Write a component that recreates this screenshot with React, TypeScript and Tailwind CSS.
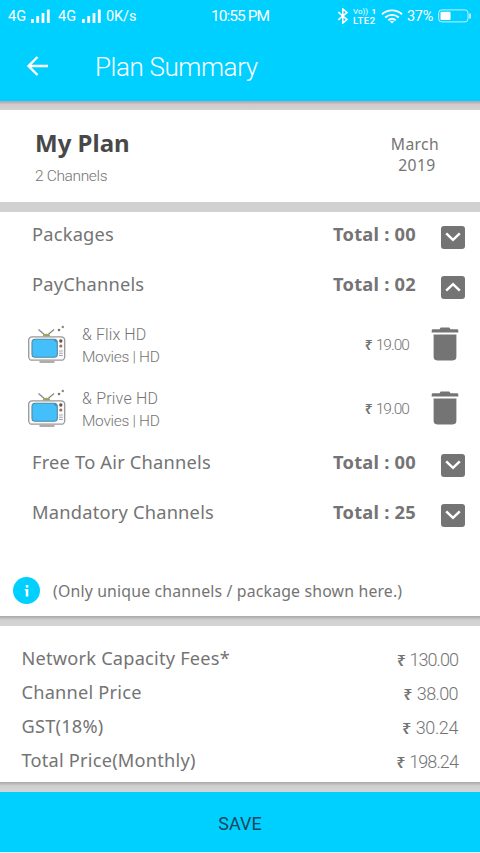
import { clsx } from "clsx"

const sections = {
  packages: { title: "Packages", total: "00", open: false },
  pay: { title: "PayChannels", total: "02", open: true },
  free: { title: "Free To Air Channels", total: "00", open: false },
  mandatory: { title: "Mandatory Channels", total: "25", open: false },
}

const channels = [
  { name: "& Flix HD", nameClass: "tracking-[0.1px]", genre: "Movies | HD", price: "19.00" },
  { name: "& Prive HD", nameClass: "tracking-[0.2px]", genre: "Movies | HD", price: "19.00" },
]

const fees = [
  { label: "Network Capacity Fees*", price: "130.00", priceClass: "tracking-[-0.95px]" },
  { label: "Channel Price", price: "38.00", priceClass: "tracking-[-0.6px]" },
  { label: "GST(18%)", price: "30.24", priceClass: "tracking-[-0.4px]" },
  { label: "Total Price(Monthly)", price: "198.24", priceClass: "tracking-[-0.9px]" },
]

function Signal() {
  return (
    <svg viewBox="0 0 20 15" width="20" height="15" fill="#fff" className="shrink-0">
      <rect x="0" y="10" width="2.8" height="4" rx="0.6" />
      <rect x="5.3" y="7" width="2.8" height="7" rx="0.6" />
      <rect x="10.6" y="4" width="2.8" height="10" rx="0.6" />
      <rect x="15.9" y="0.5" width="2.8" height="13.5" rx="0.6" />
    </svg>
  )
}

function StatusBar() {
  return (
    <div className="grid h-8 grid-cols-[211px_59px_1fr] items-center text-white">
      <div className="flex items-center pl-2">
        <span className="w-[23px] pt-[2px] text-[14.5px] tracking-[0.2px]">4G</span>
        <Signal />
        <span className="ml-[7px] w-[24px] pt-[2px] text-[14.5px] tracking-[0.2px]">4G</span>
        <Signal />
        <span className="ml-[4px] pt-[2px] text-[14.5px] tracking-[-0.1px]">0K/s</span>
      </div>
      <span className="whitespace-nowrap pt-[2px] text-[15.5px] tracking-[-0.95px]">10:55 PM</span>
      <div className="flex items-center pl-[67px]">
        <svg viewBox="0 0 12 16" width="12" height="16" fill="none" stroke="#fff" strokeWidth="1.6" className="shrink-0">
          <path d="M1.3 4.2 10 11.6 5.8 15V1L10 4.4 1.3 11.8" />
        </svg>
        <div className="ml-[4px] flex w-[25px] shrink-0 flex-col pt-px">
          <div className="flex h-[8px] items-center justify-between pr-[2px] text-[8px] leading-[8px]">
            <span>Vo))</span>
            <span className="font-bold">1</span>
          </div>
          <span className="h-[9px] whitespace-nowrap text-[9.5px] font-medium leading-[9px] tracking-[0.5px]">LTE2</span>
        </div>
        <svg viewBox="0 0 22 15" width="22" height="15" fill="none" stroke="#fff" strokeWidth="1.9" className="ml-[3px] shrink-0">
          <path d="M1 5.3c5.7-5.2 14.3-5.2 20 0M4.2 8.5c3.9-3.5 9.7-3.5 13.6 0M7.3 11.4c2.2-1.9 5.2-1.9 7.4 0" />
          <path d="m8.8 12.6 2.2 2 2.2-2c-1.3-1.1-3.1-1.1-4.4 0z" fill="#fff" stroke="none" />
        </svg>
        <span className="ml-[4px] w-[31px] pt-[2px] text-[14.5px] tracking-[-0.3px]">37%</span>
        <svg viewBox="0 0 33 14" width="33" height="14" fill="none" className="shrink-0">
          <rect x="0.7" y="0.9" width="29.3" height="12" rx="3" stroke="#fff" strokeOpacity="0.75" />
          <rect x="2.5" y="2.8" width="10" height="8.3" rx="1" fill="#fff" />
          <path d="M32 4.5v5" stroke="#fff" strokeWidth="1.3" />
        </svg>
      </div>
    </div>
  )
}

function Television() {
  return (
    <svg viewBox="0 0 38 38" width="38" height="38" fill="none" className="shrink-0">
      <path d="M10.5 4.5 18 11M26 4.5 18.5 11" stroke="#858585" strokeWidth="1.2" />
      <path d="M14.8 11.5a3.7 2.8 0 0 1 7.4 0z" fill="#a3a061" />
      <circle cx="31" cy="5" r="1.3" fill="#777" />
      <circle cx="34.8" cy="2" r="1.2" fill="#888" />
      <rect x="0.7" y="11.8" width="36" height="23.4" rx="3.5" fill="#fafafa" stroke="#999" strokeWidth="1.3" />
      <rect x="4" y="14.2" width="25.3" height="18" rx="3.3" fill="#43bffc" stroke="#5288a5" strokeWidth="1.1" />
      <path d="M25.5 14.8c2 0 3.2 1.2 3.2 3.2z" fill="#517f95" />
      <circle cx="32.8" cy="16" r="1.7" fill="#6c5050" />
      <circle cx="32.8" cy="21" r="1.6" fill="#98744e" />
      <path d="M31 26h3.8M31 28.3h3.8M31 30.5h3.8" stroke="#a5a3b5" strokeWidth="1.1" />
      <path d="M11.5 37h15" stroke="#7f7470" strokeWidth="1.2" />
    </svg>
  )
}

function Trash() {
  return (
    <svg viewBox="0 0 28 34" width="28" height="34" fill="#747474" className="shrink-0">
      <path d="M8.5 2.3 9.7.5h8.600l1.200 1.800H26q1.300 0 1.300 1.200v1.900H.7V3.500q0-1.200 1.300-1.200zM2.600 7.400h22.800v22.400c0 2.300-1.200 3.600-3.600 3.600H6.200c-2.400 0-3.600-1.300-3.600-3.600z" />
    </svg>
  )
}

function Section({ title, total, open }: { title: string; total: string; open: boolean }) {
  return (
    <div className="flex h-[50px] items-center pl-8 pr-[15px] font-['Noto_Sans',sans-serif] text-[18.3px] tracking-[0.2px] text-[#747474]">
      <span className="-mt-[6px] flex-1">{title}</span>
      <span className="-mt-[6px] w-[108px] font-bold tracking-[0.23px]">Total : {total}</span>
      <span className="flex h-[23px] w-6 items-center justify-center rounded-[3px] bg-[#747474]">
        <svg viewBox="0 0 16 10" width="16" height="10" fill="none" stroke="#fff" strokeWidth="2.5" className={clsx(open && "rotate-180")}>
          <path d="m1.2 1.3 6.8 6.5 6.8-6.5" />
        </svg>
      </span>
    </div>
  )
}

function Rupee({ amount }: { amount: string }) {
  return (
    <span className="whitespace-nowrap">
      <span className="mr-px font-['Noto_Sans',sans-serif] text-[0.9em] font-semibold">₹</span> {amount}
    </span>
  )
}

export default function App() {
  return (
    <div className="flex h-[853px] w-[480px] flex-col overflow-hidden bg-[#d1d1d1] font-[Roboto,sans-serif] text-[#747474]">
      <header className="h-[101px] shrink-0 bg-[#00d0ff]">
        <StatusBar />
        <div className="flex h-[68px] items-center pl-[26px] text-white">
          <svg viewBox="0 0 23 20" width="23" height="20" fill="none" stroke="#fff" strokeWidth="2.4" className="shrink-0">
            <path d="M22 10H2.5M11.5 1 2.5 10l9 9" />
          </svg>
          <h1 className="ml-[46px] pt-[2px] text-[26px] font-light tracking-[-0.4px]">Plan Summary</h1>
        </div>
      </header>
      <div className="h-[9px] shrink-0 bg-linear-to-b from-[#aaa4ac] via-[#d0cbcd] via-40% to-[#d4d3cf]" />

      <section className="flex h-[92px] shrink-0 justify-between bg-white pl-[35px] pr-[41px]">
        <div className="pt-[18px]">
          <h2 className="font-['Noto_Sans',sans-serif] text-[24px] font-bold leading-[30px] text-[#484848]">My Plan</h2>
          <p className="mt-[8px] text-[15.5px] font-light leading-5 tracking-[-0.35px]">2 Channels</p>
        </div>
        <div className="pt-[24px] text-center font-['Noto_Sans',sans-serif] text-[15.7px] leading-[21px] tracking-[0.35px]">
          <p>March</p>
          <p className="pl-1">2019</p>
        </div>
      </section>

      <section className="mt-[10px] h-[404px] shrink-0 bg-white">
        <Section {...sections.packages} />
        <Section {...sections.pay} />
        {channels.map((channel) => (
          <div key={channel.name} className="flex h-[64px] items-center pl-7 pr-[21px] text-[16px] font-light">
            <Television />
            <div className="ml-4 flex-1 pt-[3px] leading-[22px]">
              <p className={channel.nameClass}>{channel.name}</p>
              <p className="text-[15.5px] tracking-[-0.3px]">{channel.genre}</p>
            </div>
            <div className="mr-[22px] pt-[3px] text-[15.5px] tracking-[-0.95px]">
              <Rupee amount={channel.price} />
            </div>
            <Trash />
          </div>
        ))}
        <Section {...sections.free} />
        <Section {...sections.mandatory} />
        <div className="mt-[37px] flex items-center pl-[13px]">
          <span className="flex size-[27px] items-center justify-center rounded-full bg-[#00d0ff]">
            <svg viewBox="0 0 6 14" width="6" height="14" fill="#fff">
              <path d="M1.8 1h2.500v2.400H1.800zM.8 5h3.500v7.500H1.800V6.500H.8z" />
            </svg>
          </span>
          <p className="ml-[13px] whitespace-nowrap pt-[2px] font-['Noto_Sans',sans-serif] text-[15.8px] tracking-[0.18px]">(Only unique channels / package shown here.)</p>
        </div>
      </section>
      <div className="h-[10px] shrink-0 bg-linear-to-b from-[#a8a8a8] via-[#d1d1d1] via-40% to-[#d4d4d4]" />

      <section className="h-[156px] shrink-0 bg-white pl-[21.5px] pr-[22px] pt-4">
        {fees.map((fee) => (
          <div key={fee.label} className="flex h-[34px] items-center justify-between">
            <span className="-mt-px font-['Noto_Sans',sans-serif] text-[18.2px] tracking-[0.22px]">{fee.label}</span>
            <span className={clsx("text-[18px] font-light", fee.priceClass)}>
              <Rupee amount={fee.price} />
            </span>
          </div>
        ))}
      </section>
      <div className="h-[10px] shrink-0 bg-linear-to-b from-[#a8a8a8] via-[#d1d1d1] via-40% to-[#d4d4d4]" />

      <button className="h-[60px] shrink-0 bg-[#00d0ff] pt-[2px] text-[18px] text-[#17475a]">SAVE</button>
      <div className="h-px shrink-0 bg-[#e5f9ff]" />
    </div>
  )
}
